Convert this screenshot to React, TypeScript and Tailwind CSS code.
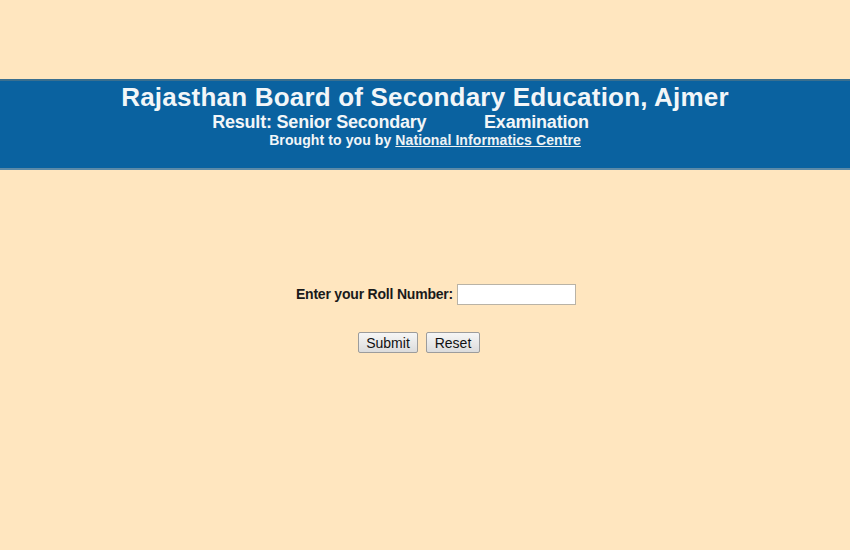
export default function App() {
  return (
    <div
      className="w-[850px] h-[550px] bg-[#ffe6bf] overflow-hidden"
      style={{ fontFamily: '"Liberation Sans", Arial, sans-serif' }}
    >
      <div className="h-[79px]" />
      {/* Header band */}
      <div className="h-[91px] bg-[#0a62a0] border-t-2 border-b-2 border-t-[#3a6f8f] border-b-[#5c8aa8] flex flex-col items-center pt-[1px] text-[#f2f6f8]">
        <div className="text-[26px] font-bold leading-[30px] tracking-[0.2px]">
          Rajasthan Board of Secondary Education, Ajmer
        </div>
        <div className="text-[18px] font-bold leading-[20px] tracking-[-0.2px] whitespace-pre mr-[49px]">
          {'Result: Senior Secondary            Examination'}
        </div>
        <div className="text-[14px] font-bold leading-[16px] tracking-[0.1px]">
          Brought to you by <a className="underline text-[#eef3f5]">National Informatics Centre</a>
        </div>
      </div>

      {/* Form */}
      <div className="flex flex-col items-center pt-[114px]">
        <div className="flex items-center gap-[4px] ml-[22px]">
          <label className="text-[14px] font-bold tracking-[-0.2px] text-[#1a1a1a]">Enter your Roll Number:</label>
          <input
            type="text"
            className="w-[119px] h-[21px] bg-white border border-[#b9b3a6] outline-none px-1 text-[13px]"
          />
        </div>
        <div className="flex gap-[8px] mt-[27px] ml-[-12px]">
          <button className="w-[60px] h-[21px] text-[14px] text-[#111] bg-gradient-to-b from-[#f6f6f6] to-[#dcdcdc] border border-[#9c9c9c] rounded-[2px]">
            Submit
          </button>
          <button className="w-[54px] h-[21px] text-[14px] text-[#111] bg-gradient-to-b from-[#f6f6f6] to-[#dcdcdc] border border-[#9c9c9c] rounded-[2px]">
            Reset
          </button>
        </div>
      </div>
    </div>
  );
}
